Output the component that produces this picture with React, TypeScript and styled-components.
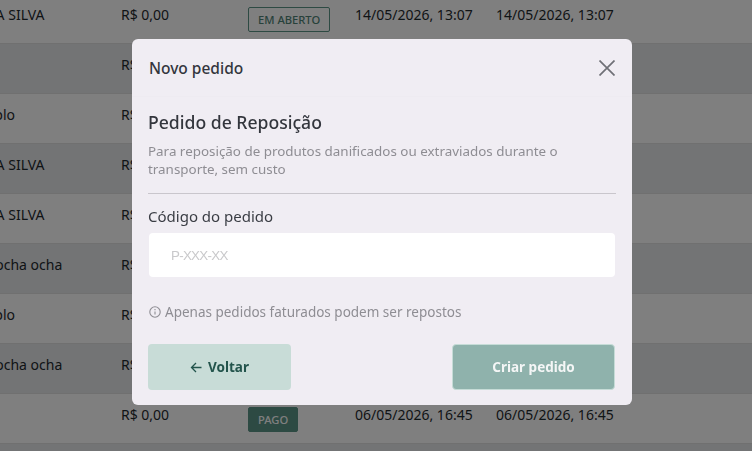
import React from "react";
import styled, { createGlobalStyle } from "styled-components";

const Global = createGlobalStyle`
  html, body { margin: 0; padding: 0; width: 752px; height: 451px; overflow: hidden; background: #fff; }
  * { box-sizing: border-box; }
`;

const FONT = `"Noto Sans", "Open Sans", sans-serif`;

const Page = styled.div`
  width: 752px;
  height: 451px;
  overflow: hidden;
  font-family: ${FONT};
  color: #1f2a2e;
`;

const Table = styled.div`
  margin-top: -6px;
  margin-left: -62px;
  width: 814px;
`;

const Row = styled.div<{ $alt?: boolean }>`
  display: grid;
  grid-template-columns: 183px 127px 107px 141px 1fr;
  height: 50px;
  padding-top: 10px;
  font-size: 14px;
  line-height: 22px;
  border-bottom: 1px solid #e0e0e0;
  background: ${(p) => (p.$alt ? "#e6e8ea" : "#ffffff")};
`;

const Cell = styled.div`
  white-space: nowrap;
  overflow: hidden;
`;

const Badge = styled.span<{ $filled?: boolean }>`
  display: inline-flex;
  align-items: center;
  justify-content: center;
  height: 25px;
  margin-top: 3px;
  padding: 0 9px;
  font-size: 11.2px;
  font-weight: 500;
  border-radius: 2px;
  border: 1px solid #5a9486;
  color: ${(p) => (p.$filled ? "#fff" : "#4f8376")};
  background: ${(p) => (p.$filled ? "#5a9486" : "transparent")};
`;

const Overlay = styled.div`
  position: fixed;
  inset: 0;
  background: rgba(0, 0, 0, 0.5);
  display: flex;
  justify-content: center;
  align-items: flex-start;
  padding: 39px 0 0 12px;
`;

const Modal = styled.div`
  width: 500px;
  height: 366px;
  background: #f0edf3;
  border-radius: 6px;
  display: flex;
  flex-direction: column;
`;

const Header = styled.div`
  height: 58px;
  padding: 0 17px 0 17px;
  display: flex;
  align-items: center;
  justify-content: space-between;
  border-bottom: 1px solid #eeebf1;
`;

const HeaderTitle = styled.h2`
  margin: 0;
  font-size: 15.5px;
  font-weight: 500;
  color: #33363d;
`;

const Close = styled.button`
  border: 0;
  background: none;
  padding: 0;
  width: 16px;
  height: 16px;
  display: flex;
  color: #6f7076;
`;

const Body = styled.div`
  padding: 0 16px;
  display: flex;
  flex-direction: column;
  flex: 1;
`;

const Title = styled.h3`
  margin: 13px 0 0;
  font-size: 17.6px;
  line-height: 24px;
  font-weight: 500;
  color: #33363d;
`;

const Lead = styled.p`
  margin: 8px 0 0;
  font-size: 13.4px;
  line-height: 18px;
  color: #8e8d93;
  padding-bottom: 15px;
  border-bottom: 1px solid #c9c6cc;
`;

const Label = styled.label`
  margin-top: 12px;
  font-size: 15px;
  line-height: 20px;
  color: #3a3d44;
`;

const Input = styled.input`
  margin-top: 7px;
  height: 44px;
  width: 466px;
  margin-left: 1px;
  border: 0;
  border-radius: 4px;
  background: #fff;
  padding: 0 22px;
  font-family: "Liberation Sans", sans-serif;
  font-size: 13.33px;
  letter-spacing: -0.7px;
  outline: none;
  &::placeholder { color: #c9c9cb; }
`;

const Hint = styled.div`
  margin-top: 25px;
  margin-left: 1px;
  display: flex;
  align-items: center;
  gap: 4px;
  font-size: 13.5px;
  line-height: 20px;
  color: #8e8d93;
`;

const Actions = styled.div`
  margin-top: 22px;
  padding-right: 1px;
  display: flex;
  justify-content: space-between;
`;

const Button = styled.button<{ $primary?: boolean }>`
  height: 46px;
  width: ${(p) => (p.$primary ? "163px" : "143px")};
  border: ${(p) => (p.$primary ? "1px solid #c6dcd7" : "0")};
  border-radius: 4px;
  display: flex;
  align-items: center;
  justify-content: center;
  gap: 6px;
  font-family: ${FONT};
  font-size: 13.5px;
  font-weight: 700;
  background: ${(p) => (p.$primary ? "#8fb2ac" : "#c8dcd7")};
  color: ${(p) => (p.$primary ? "#f4f6f6" : "#23544c")};
`;

const rows = [
  { name: "MARIA DA SILVA", price: "R$ 0,00", badge: "EM ABERTO", d: "14/05/2026, 13:07" },
  { name: "", price: "R$ 0,00", alt: true },
  { name: "Ilo Exemplo", price: "R$ 0,00" },
  { name: "MARIA DA SILVA", price: "R$ 0,00", alt: true },
  { name: "MARIA DA SILVA", price: "R$ 0,00" },
  { name: "Márcio Rocha ocha", price: "R$ 0,00", alt: true },
  { name: "Ilo Exemplo", price: "R$ 0,00" },
  { name: "Márcio Rocha ocha", price: "R$ 0,00", alt: true },
  { name: "", price: "R$ 0,00", badge: "PAGO", filled: true, d: "06/05/2026, 16:45" },
  { name: "", price: "", alt: true },
];

export default function App() {
  return (
    <Page>
      <Global />
      <Table>
        {rows.map((r, i) => (
          <Row key={i} $alt={r.alt}>
            <Cell>{r.name}</Cell>
            <Cell>{r.price}</Cell>
            <Cell>{r.badge && <Badge $filled={r.filled}>{r.badge}</Badge>}</Cell>
            <Cell>{r.d}</Cell>
            <Cell>{r.d}</Cell>
          </Row>
        ))}
      </Table>
      <Overlay>
        <Modal>
          <Header>
            <HeaderTitle>Novo pedido</HeaderTitle>
            <Close aria-label="Fechar">
              <svg width="16" height="16" viewBox="0 0 16 16" fill="none" stroke="currentColor" strokeWidth="1.7">
                <path d="M.5.5l15 15M15.5.5l-15 15" />
              </svg>
            </Close>
          </Header>
          <Body>
            <Title>Pedido de Reposição</Title>
            <Lead>Para reposição de produtos danificados ou extraviados durante o transporte, sem custo</Lead>
            <Label>Código do pedido</Label>
            <Input placeholder="P-XXX-XX" />
            <Hint>
              <svg width="12" height="12" viewBox="0 0 12 12" fill="none" stroke="currentColor" strokeWidth="1.1">
                <circle cx="6" cy="6" r="5.2" />
                <path d="M6 5.4v3.2M6 3v1.2" />
              </svg>
              Apenas pedidos faturados podem ser repostos
            </Hint>
            <Actions>
              <Button>
                <svg width="12" height="11" viewBox="0 0 12 11" fill="none" stroke="currentColor" strokeWidth="1.3">
                  <path d="M11.5 5.5H1.5M6 1L1.5 5.5 6 10" />
                </svg>
                Voltar
              </Button>
              <Button $primary>Criar pedido</Button>
            </Actions>
          </Body>
        </Modal>
      </Overlay>
    </Page>
  );
}
